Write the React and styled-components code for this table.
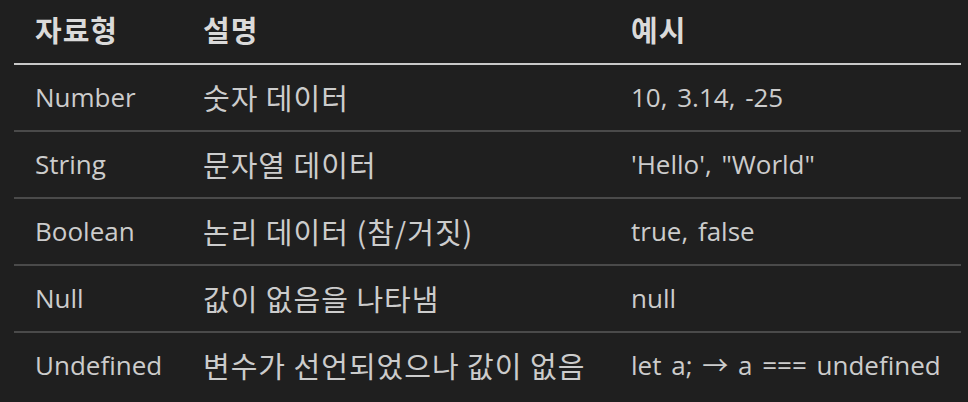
import React from 'react';
import styled, { createGlobalStyle } from 'styled-components';

const GlobalStyle = createGlobalStyle`
  html, body {
    margin: 0;
    padding: 0;
    background: #1f1f1f;
  }
  body {
    font-family: "Open Sans", "Noto Sans CJK KR", sans-serif;
    color: #cccccc;
  }
`

const Page = styled.div`
  padding: 0 7px 0 14px;
`

const Table = styled.table`
  width: 947px;
  border-collapse: collapse;
  table-layout: fixed;
`

const Col = styled.col`
  width: ${(p) => p.$width}px;
`

const HeadRow = styled.tr`
  border-bottom: 2px solid #c8c8c8;
`

const BodyRow = styled.tr`
  border-bottom: 2px solid #4a4a4a;

  &:last-child {
    border-bottom: none;
  }
`

const cellText = (p) =>
  p.$ko
    ? `font-family: "Noto Sans CJK KR", "Open Sans", sans-serif;
       font-size: 29px;
       letter-spacing: 1px;`
    : `font-family: "Open Sans", "Noto Sans CJK KR", sans-serif;
       font-size: 26px;`

const HeadCell = styled.th`
  ${cellText}
  text-align: left;
  font-weight: 700;
  color: #dadada;
  padding: 11px 0 16px 21px;
  line-height: 36px;
  white-space: nowrap;
`

const Cell = styled.td`
  ${cellText}
  text-align: left;
  padding: 14px 0 15px 21px;
  line-height: 36px;
  white-space: nowrap;
`

const Code = styled.span`
  word-spacing: 3px;
`

const rows = [
  ['Number', '숫자 데이터', '10, 3.14, -25'],
  ['String', '문자열 데이터', `'Hello', "World"`],
  ['Boolean', '논리 데이터 (참/거짓)', 'true, false'],
  ['Null', '값이 없음을 나타냄', 'null'],
  ['Undefined', '변수가 선언되었으나 값이 없음', 'let a; → a === undefined'],
]

const App = () => {
  return (
    <>
      <GlobalStyle />
      <Page>
        <Table>
          <colgroup>
            <Col $width={168} />
            <Col $width={428} />
            <Col $width={351} />
          </colgroup>
          <thead>
            <HeadRow>
              <HeadCell $ko>자료형</HeadCell>
              <HeadCell $ko>설명</HeadCell>
              <HeadCell $ko>예시</HeadCell>
            </HeadRow>
          </thead>
          <tbody>
            {rows.map(([type, desc, example], index) => (
              <BodyRow key={`row${index}`}>
                <Cell>{type}</Cell>
                <Cell $ko>{desc}</Cell>
                <Cell>
                  <Code>{example}</Code>
                </Cell>
              </BodyRow>
            ))}
          </tbody>
        </Table>
      </Page>
    </>
  )
};

export default App;
